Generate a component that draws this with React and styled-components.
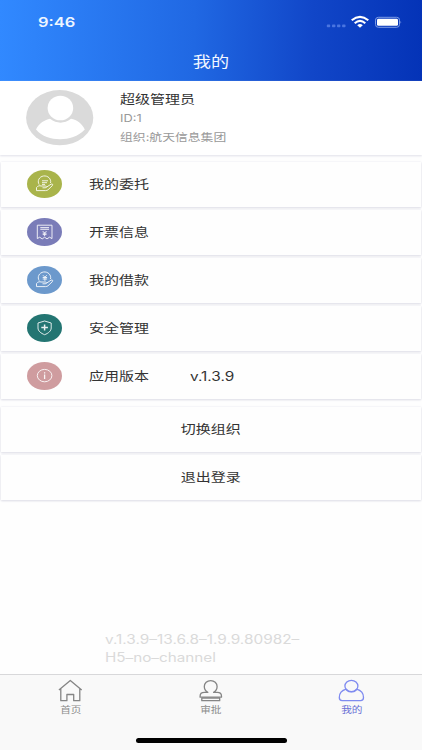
import React from 'react';
import styled, { createGlobalStyle } from 'styled-components'

const GlobalStyle = createGlobalStyle`
  * { box-sizing: border-box; }
  body {
    margin: 0;
    background: #fefefe;
    font-family: Inter, "Liberation Sans", "Noto Sans CJK SC", sans-serif;
  }
`
const Page = styled.div`
  width: 422px;
  height: 750px;
  display: flex;
  flex-direction: column;
  overflow: hidden;
`
// wide lettering used over the whole app
const Text = styled.span`
  display: block;
  white-space: pre;
  font-size: ${p => p.$size || 12.4}px;
  line-height: ${p => p.$line || 18}px;
  font-weight: ${p => p.$weight || 400};
  color: ${p => p.$color || '#333'};
  transform: scaleX(${p => p.$wide || 1.21});
  transform-origin: ${p => p.$origin || 'left'} center;
`
const Header = styled.header`
  height: 81px;
  flex: none;
  background: linear-gradient(91deg, #3189ff 0%, #2068e3 46%, #1146c8 74%, #0433b7 100%);
`
const StatusBar = styled.div`
  height: 44px;
  padding: 0 20px 0 38px;
  display: flex;
  align-items: center;
  justify-content: space-between;
`
const Title = styled.div`
  height: 35px;
  display: flex;
  justify-content: center;
  align-items: center;
`
const Profile = styled.section`
  height: 74px;
  flex: none;
  display: flex;
  padding: 9px 0 0 26px;
  background: #fff;
  box-shadow: 0 1px 2px #e0e0ea;
`
const ProfileInfo = styled.div`
  margin: 1px 0 0 25.5px;
`
const Group = styled.section`
  flex: none;
  margin-top: ${p => p.$gap}px;
  padding: 0 1px;
`
const Row = styled.div`
  height: 45px;
  display: flex;
  align-items: center;
  justify-content: ${p => (p.$center ? 'center' : 'flex-start')};
  padding-left: ${p => (p.$center ? 0 : 26)}px;
  margin-bottom: 3px;
  background: #fefefe;
  box-shadow: 0 1px 2px #dedee6, 0 0 2px #ececf2;
`
const Badge = styled.div`
  width: 35px;
  height: 28px;
  margin: 0 27px 1px 0;
  border-radius: 50%;
  background: ${p => p.$color};
`
const RowLabel = styled.div`
  width: 101px;
`
const Build = styled.div`
  flex: 1;
  display: flex;
  flex-direction: column;
  justify-content: flex-end;
  padding: 0 0 7px 105px;
`
const TabBar = styled.nav`
  height: 76px;
  flex: none;
  display: flex;
  flex-wrap: wrap;
  justify-content: center;
  align-content: flex-start;
  background: #f9f9f9;
  border-top: 1px solid #d8d8da;
`
const Tab = styled.div`
  width: 33.333%;
  height: 63px;
  padding-top: 4px;
  display: flex;
  flex-direction: column;
  align-items: center;
`
const HomeIndicator = styled.div`
  width: 151px;
  height: 5px;
  border-radius: 3px;
  background: #000;
`

const StatusIcons = () => (
  <svg width="80" height="16" viewBox="0 0 80 16">
    <g fill="#4a75e0">
      <rect x="4.8" y="10.6" width="3.4" height="2.6" rx=".8" />
      <rect x="10" y="10.6" width="3.4" height="2.6" rx=".8" />
      <rect x="15" y="10.6" width="3.4" height="2.6" rx=".8" />
      <rect x="20.1" y="10.6" width="3.4" height="2.6" rx=".8" />
    </g>
    <g fill="none" stroke="#fff" strokeWidth="2.1">
      <path d="M29.7 6.3Q38 -.5 46.3 6.3" />
      <path d="M32.7 9.2Q38 4.6 43.3 9.2" />
    </g>
    <path d="M35.2 11.2Q38 8.9 40.8 11.2L38 13.8Z" fill="#fff" />
    <rect x="53.5" y="3.3" width="24" height="10" rx="2.8" fill="none" stroke="#7c9be5" />
    <rect x="55" y="4.8" width="21" height="7" rx="1.4" fill="#fff" />
    <path d="M78.5 6.7q1.5 1.5 0 3z" fill="#7c9be5" />
  </svg>
)

const Avatar = () => (
  <svg width="68" height="56" viewBox="0 0 68 56">
    <ellipse cx="33.7" cy="27.7" rx="33.6" ry="27.6" fill="#dadada" />
    <path d="M10 39.5C13 33 19 30 24 28.8Q34.5 36.5 45 28.8C51 30 56 33.5 58.8 39.5C52 46.5 43 49.2 34 49.2S16 46.5 10 39.5Z" fill="#fff" />
    <ellipse cx="34.4" cy="18" rx="12.8" ry="12.3" fill="#fff" />
  </svg>
)

const hand = 'M9.5 17.5C11 15.8 12.5 15.4 14 16H18.5C20 16.2 19.6 17.8 18.2 17.8H15.5M19.3 17.3L24 14.2C25.5 13.4 26.3 14.6 25.2 15.8L21 19.8Q20 20.6 18.5 20.6H9.5V17.5'
const glyphs = {
  entrust: (
    <>
      <path d={hand} />
      <path d="M12.2 14.6A6.2 5.7 0 1 1 23.5 13M15 10.8H21M15 12.7H20M15 14.4H18" />
    </>
  ),
  invoice: (
    <>
      <path d="M10.3 7.2H25V20.6L22.5 19.2L20 20.9L17.6 19.2L15.2 20.9L12.7 19.2L10.3 20.6ZM13.3 9.6H22M13.3 11.3H22" />
      <path d="M15.7 13.1L17.6 15L19.5 13.1M15.7 15.2H19.5M15.7 16.6H19.5M17.6 15V18" />
    </>
  ),
  loan: (
    <>
      <path d={hand} />
      <path d="M12.2 14.6A6.2 5.7 0 1 1 23.5 13M16 9.3L17.9 11.2L19.8 9.3M15.7 11.5H20.1M15.7 13H20.1M17.9 11.2V14.8" />
    </>
  ),
  shield: (
    <>
      <path d="M17.6 7L24.2 9V14C24.2 17 21.3 19.3 17.6 20.7C13.9 19.3 11 17 11 14V9Z" />
      <path strokeWidth="1.5" d="M14.3 13.4H20.9M17.6 10.6V16.4" />
    </>
  ),
  info: (
    <>
      <ellipse cx="17.6" cy="13.6" rx="7.3" ry="6.2" />
      <path strokeWidth="1.3" d="M17.6 12.6V17M17.6 10.2V11.4" />
    </>
  ),
}

const RowIcon = ({ name }) => (
  <svg width="35" height="28" viewBox="0 0 35 28" fill="none" stroke="#fff" strokeWidth=".95" strokeLinejoin="round" opacity=".9">
    {glyphs[name]}
  </svg>
)

const tabIcons = {
  home: <path d="M1.9 10.9L13.3 1.4L24.7 10.9M3.8 9.4V21.7H9.9V15.5H16.7V21.7H22.8V9.4" />,
  stamp: (
    <>
      <path d="M9.8 13.4C7.8 12.3 6.3 10.2 6.3 7.6C6.3 4.2 9.1 1.6 12.7 1.6S19.1 4.2 19.1 7.6C19.1 10.2 17.6 12.3 15.6 13.4H19.3C21.9 13.4 23.5 15.1 23.5 17.2V18.2H2.1V17.2C2.1 15.1 3.7 13.4 6.3 13.4Z" />
      <path d="M3.8 19H21.7V21.7H3.8Z" />
    </>
  ),
  user: (
    <>
      <ellipse cx="12.4" cy="7.1" rx="6.5" ry="5.8" />
      <path d="M7.2 10.2C2.8 11.4.3 14.5.3 18.5C.3 20.8 1.2 21.6 3.1 21.6H21.7C23.6 21.6 24.5 20.8 24.5 18.5C24.5 14.5 22 11.4 17.6 10.2C14.8 13.4 10 13.4 7.2 10.2Z" />
    </>
  ),
}

const rows = [
  { label: '我的委托', icon: 'entrust', color: '#a9b44b' },
  { label: '开票信息', icon: 'invoice', color: '#7a7cb8' },
  { label: '我的借款', icon: 'loan', color: '#6c99cc' },
  { label: '安全管理', icon: 'shield', color: '#237572' },
  { label: '应用版本', icon: 'info', color: '#cf9c9f', value: 'v.1.3.9' },
]
const tabs = [
  { label: '首页', icon: 'home' },
  { label: '审批', icon: 'stamp' },
  { label: '我的', icon: 'user', active: true },
]


function App() {
  return (
    <Page>
      <GlobalStyle />
      <Header>
        <StatusBar>
          <Text $size={13.2} $weight={600} $color="#eef6ff" $wide={1.25}>9:46</Text>
          <StatusIcons />
        </StatusBar>
        <Title>
          <Text $size={15} $color="#f2f7ff" $origin="center">我的</Text>
        </Title>
      </Header>
      <Profile>
        <Avatar />
        <ProfileInfo>
          <Text>超级管理员</Text>
          <Text $size={10.6} $line={20} $color="#999">ID:1</Text>
          <Text $size={10.6} $color="#999">组织:航天信息集团</Text>
        </ProfileInfo>
      </Profile>
      <Group $gap={7}>
        {rows.map(row => (
          <Row key={row.label}>
            <Badge $color={row.color}><RowIcon name={row.icon} /></Badge>
            <RowLabel><Text>{row.label}</Text></RowLabel>
            {row.value && <Text $wide={1.24}>{row.value}</Text>}
          </Row>
        ))}
      </Group>
      <Group $gap={5}>
        <Row $center><Text $origin="center">切换组织</Text></Row>
        <Row $center><Text $origin="center">退出登录</Text></Row>
      </Group>
      <Build>
        <Text $color="#dadada" $wide={1.24}>v.1.3.9–13.6.8–1.9.9.80982–</Text>
        <Text $color="#dadada" $wide={1.23}>H5–no–channel</Text>
      </Build>
      <TabBar>
        {tabs.map(tab => (
          <Tab key={tab.label}>
            <svg width="26" height="24" viewBox="0 0 26 24" overflow="visible" fill="none" stroke={tab.active ? '#7f8bf0' : '#858585'} strokeWidth="1.3" strokeLinejoin="round">
              {tabIcons[tab.icon]}
            </svg>
            <Text $size={8.8} $line={14} $origin="center" $color={tab.active ? '#6970d5' : '#8c8c8c'}>{tab.label}</Text>
          </Tab>
        ))}
        <HomeIndicator />
      </TabBar>
    </Page>
  )
}

export default App;
